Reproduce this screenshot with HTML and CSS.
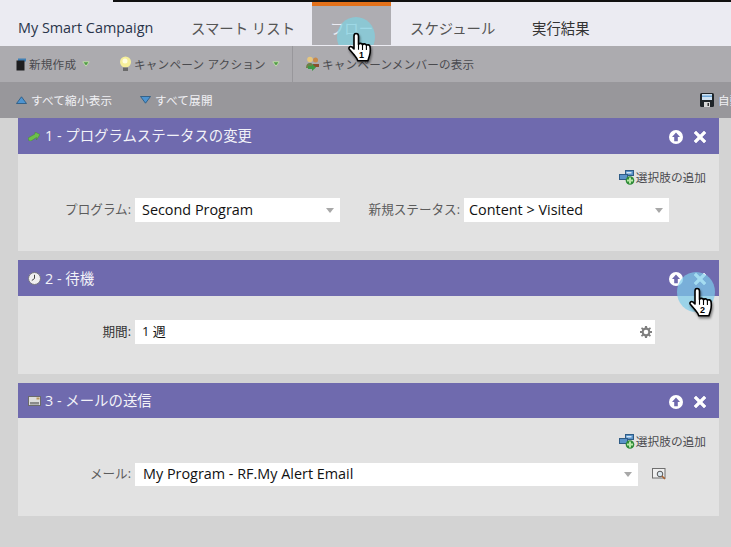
FILE: index.html
```html
<!DOCTYPE html>
<html lang="ja">
<head>
<meta charset="utf-8">
<title>My Smart Campaign</title>
<link rel="stylesheet" href="styles.css">
</head>
<body>
<svg class="defs" width="0" height="0" aria-hidden="true">
  <defs>
    <symbol id="up" viewBox="0 0 14 14"><circle cx="7" cy="7" r="7" fill="#fff"/><path d="M7 2.600 11 7H8.800v4.200H5.200V7H3z" fill="#6f6aae"/></symbol>
    <symbol id="x" viewBox="0 0 14 14"><path d="M3 1 7 5l4-4 2 2-4 4 4 4-2 2-4-4-4 4-2-2 4-4-4-4z" fill="#fff" stroke="#fff" stroke-width=".6" stroke-linejoin="round"/></symbol>
    <symbol id="add" viewBox="0 0 16 15"><rect x="6.500" y=".5" width="8" height="5" fill="#5a93c8" stroke="#2f5c86"/><rect x=".5" y="4.500" width="8" height="5" fill="#5a93c8" stroke="#2f5c86"/><rect x="7.500" y="2" width="5" height="1.500" fill="#d5e6f5"/><circle cx="11" cy="10.500" r="4.300" fill="#2e8b37"/><path d="M10 7.500h2v2h2v2h-2v2h-2v-2H8v-2h2z" fill="#b9e8a8"/></symbol>
    <symbol id="hand" viewBox="0 0 26 32"><path d="M8 1.500c1.600 0 2.500 1 2.500 2.600v8.400c.5-1.600 3.500-1.500 4 .3.700-1.400 3.400-1.200 3.900.6.900-1.100 3.300-.7 3.600 1.100.4 2.500.3 6.700-.6 9.400l-1.500 4.800H9.800c-.7-2.600-2.400-4.100-4.200-6.400L1.300 17.200c-1-1.500.7-3.400 2.500-2.300l2.200 2V4.100C6 2.500 6.600 1.500 8 1.500z" fill="#fff" stroke="#000" stroke-width="1.600" stroke-linejoin="round"/><path d="M10.500 12.800v5M14.500 13v5M18.400 14v4" stroke="#000" stroke-width="1.100" fill="none"/></symbol>
    <symbol id="tri" viewBox="0 0 8 6"><path d="M.8.8h6.400L4 5.200z" fill="#4f9a45" stroke="#cfe9b8" stroke-width=".8"/></symbol>
  </defs>
</svg>

<div class="page">
  <nav class="tabs">
    <span class="tab tab-name">My Smart Campaign</span>
    <span class="tab tab-list">スマート リスト</span>
    <span class="tab tab-active">フロー</span>
    <span class="tab tab-sched">スケジュール</span>
    <span class="tab tab-res">実行結果</span>
  </nav>

  <div class="toolbar">
    <span class="tool tool-new">
      <svg class="ico" width="11" height="15" viewBox="0 0 11 15"><path d="M2 2.500h8v3H2z" fill="#3f7fb5"/><path d="M.5 4.500h8v10h-8z" fill="#1d1d1f"/></svg>
      <span class="tool-text">新規作成</span>
      <svg class="tri" width="8" height="6"><use href="#tri"/></svg>
    </span>
    <span class="tool tool-action">
      <svg class="ico" width="13" height="16" viewBox="0 0 13 16"><circle cx="6.500" cy="6" r="5.500" fill="#f6ef9a"/><circle cx="6" cy="5" r="2.500" fill="#fffde0"/><path d="M4 11.500h5V15H4z" fill="#6a6a6a"/></svg>
      <span class="tool-text">キャンペーン アクション</span>
      <svg class="tri" width="8" height="6"><use href="#tri"/></svg>
    </span>
    <span class="tool tool-members">
      <svg class="ico" width="15" height="15" viewBox="0 0 15 15"><circle cx="5" cy="3.500" r="2.800" fill="#e7c77e"/><circle cx="10.500" cy="4" r="2.500" fill="#c88a4a"/><path d="M1 12c0-3.500 1.500-5 4-5s3 1.500 3 5z" fill="#6f7f48"/><path d="M8 11V8h6v3z" fill="#8a4f2e"/><path d="M3 10h4V8l4 3.500L7 15v-2H3z" fill="#3c9a45"/></svg>
      <span class="tool-text">キャンペーンメンバーの表示</span>
    </span>
  </div>

  <div class="subbar">
    <span class="sub sub-collapse">
      <svg class="ico" width="11" height="8" viewBox="0 0 11 8"><path d="M5.500.8 10.500 7.500H.5z" fill="#4e94d0" stroke="#24557f" stroke-width=".8"/></svg>
      すべて縮小表示
    </span>
    <span class="sub">
      <svg class="ico" width="11" height="8" viewBox="0 0 11 8"><path d="M.5.5h10L5.500 7.200z" fill="#4e94d0" stroke="#24557f" stroke-width=".8"/></svg>
      すべて展開
    </span>
    <span class="sub sub-save">
      <svg class="ico" width="14" height="14" viewBox="0 0 14 14"><rect width="14" height="14" rx="1.500" fill="#1f2428"/><rect x="2" y="1" width="10" height="6" fill="#cfe2f2"/><rect x="2" y="2.500" width="10" height="1.500" fill="#6ea6d6"/><rect x="4" y="9" width="6" height="5" fill="#d8d8d8"/><rect x="7.500" y="10" width="1.500" height="3" fill="#333"/></svg>
      自動保存
    </span>
  </div>

  <main class="flow">
    <section class="card card-1">
      <header class="card-head">
        <svg class="ico" width="12" height="9" viewBox="0 0 12 9"><path d="M0 6 7 2V0l5 2.500L8.500 8V5.500L3 9H1z" fill="#6cc04a" stroke="#3d7f2c" stroke-width=".4"/></svg>
        <span class="card-title">1 - プログラムステータスの変更</span>
        <span class="card-actions"><svg width="14" height="14"><use href="#up"/></svg><svg width="14" height="14"><use href="#x"/></svg></span>
      </header>
      <div class="card-body">
        <div class="choice"><svg width="16" height="15"><use href="#add"/></svg>選択肢の追加</div>
        <div class="row row-1">
          <label class="lbl lbl-prog">プログラム:</label>
          <div class="select sel-prog"><span>Second Program</span><i class="caret"></i></div>
          <label class="lbl lbl-status">新規ステータス:</label>
          <div class="select sel-status"><span>Content &gt; Visited</span><i class="caret"></i></div>
        </div>
      </div>
    </section>

    <section class="card card-2">
      <header class="card-head">
        <svg class="ico" width="13" height="13" viewBox="0 0 13 13"><circle cx="6.500" cy="6.500" r="6" fill="#f0f0f0" stroke="#77777f"/><path d="M6.500 2.800v3.700L3.800 8.500" stroke="#444" fill="none"/></svg>
        <span class="card-title">2 - 待機</span>
        <span class="card-actions"><svg width="14" height="14"><use href="#up"/></svg><svg width="14" height="14"><use href="#x"/></svg></span>
      </header>
      <div class="card-body">
        <div class="row">
          <label class="lbl lbl-prog lbl-dark">期間:</label>
          <div class="select sel-period"><span class="period-text">1 週</span>
            <svg class="gear" width="12" height="12" viewBox="0 0 12 12"><path d="M5 0h2l.3 1.700 1.200.5L10 1.200 11 2.600 9.800 3.800l.4 1.200H12v2h-1.800l-.4 1.200L11 9.400 9.800 10.800 8.500 9.800l-1.200.5L7 12H5l-.3-1.700-1.200-.5L2 10.800.9 9.400 2.200 8.200 1.800 7H0V5h1.800l.4-1.200L1 2.600 2 1.200l1.500 1 1.200-.5z" fill="#7f7f7f"/><circle cx="6" cy="6" r="2.300" fill="#fff"/></svg>
          </div>
        </div>
      </div>
    </section>

    <section class="card card-3">
      <header class="card-head">
        <svg class="ico" width="13" height="10" viewBox="0 0 13 10"><rect x=".5" y=".5" width="12" height="9" fill="#dcdcdc" stroke="#6b6b6b"/><path d="M2 6h9v2.500H2z" fill="#8a8a8a"/><rect x="8.500" y="1.500" width="3" height="2" fill="#b9975a"/></svg>
        <span class="card-title">3 - メールの送信</span>
        <span class="card-actions"><svg width="14" height="14"><use href="#up"/></svg><svg width="14" height="14"><use href="#x"/></svg></span>
      </header>
      <div class="card-body">
        <div class="choice"><svg width="16" height="15"><use href="#add"/></svg>選択肢の追加</div>
        <div class="row row-3">
          <label class="lbl lbl-prog">メール:</label>
          <div class="select sel-mail"><span>My Program - RF.My Alert Email</span><i class="caret"></i></div>
          <svg class="lookup" width="14" height="12" viewBox="0 0 14 12"><rect x=".5" y=".5" width="12.500" height="9.500" fill="#efefef" stroke="#6f6f6f"/><circle cx="8" cy="6" r="2.800" fill="#dbe7ef" stroke="#555"/><path d="m10 8 3 3" stroke="#a9622f" stroke-width="1.500"/></svg>
        </div>
      </div>
    </section>
  </main>
</div>

<div class="topline"></div>
<div class="pulse pulse-1"></div>
<svg class="hand hand-1" width="26" height="32"><use href="#hand"/></svg>
<span class="num num-1">1</span>
<div class="pulse pulse-2"></div>
<svg class="hand hand-2" width="26" height="32"><use href="#hand"/></svg>
<span class="num num-2">2</span>
</body>
</html>
```

FILE: styles.css
```css
* { box-sizing: border-box; }
html, body { margin: 0; padding: 0; }
body {
  width: 731px;
  height: 547px;
  overflow: hidden;
  position: relative;
  background: #d3d3d3;
  font-family: "Open Sans", "Noto Sans CJK JP", sans-serif;
  color: #333;
}
.defs { position: absolute; }
.page { display: flex; flex-direction: column; height: 547px; }

.tabs {
  display: flex;
  height: 46px;
  flex: none;
  background: #ebebf2;
  font-size: 14.400px;
  color: #333;
}
.tab { display: flex; align-items: center; height: 45px; padding-top: 9px; white-space: nowrap; }
.tab-name { margin-left: 18px; color: #29344a; width: 173px; }
.tab-list { width: 121px; color: #555; }
.tab-active {
  width: 79px;
  justify-content: center;
  background: #aeadb2;
  border-top: 6px solid #e4711a;
  padding-top: 3px;
  color: #ebebf2;
}
.tab-sched { margin-left: 19px; width: 122px; color: #555; }
.tab-res { color: #333; }

.toolbar {
  display: flex;
  align-items: center;
  height: 36px;
  flex: none;
  background: #acabaf;
  font-size: 11.600px;
  color: #4a4a4e;
  letter-spacing: .2px;
}
.tool { display: flex; align-items: center; gap: 2px; height: 36px; padding-bottom: 1px; }
.tool-text { white-space: nowrap; }
.tool-new { margin-left: 16px; width: 103px; }
.tool-action { width: 173px; }
.tool-members { border-left: 1px solid #98979b; padding-left: 12px; }
.tri { margin-left: 4px; }

.subbar {
  display: flex;
  align-items: center;
  height: 36px;
  flex: none;
  background: #98979b;
  font-size: 11.600px;
  color: #f0f0f4;
  letter-spacing: .2px;
}
.sub { display: flex; align-items: center; gap: 4px; white-space: nowrap; }
.sub-collapse { margin-left: 16px; width: 124px; }
.sub-save { margin-left: auto; width: 31px; overflow: hidden; flex: none; }
.sub-save .ico { flex: none; }

.flow { display: flex; flex-direction: column; gap: 9px; padding: 0 12px 0 18px; }
.card { display: flex; flex-direction: column; }
.card-head {
  display: flex;
  align-items: center;
  height: 36px;
  padding: 0 12px 0 10px;
  background: #6f6aae;
  color: #f2f2f8;
  font-size: 14.400px;
  line-height: 20px;
}
.card-3 .card-head { height: 35px; }
.card-title { margin-left: 5px; }
.card-2 .card-title { margin-left: 4px; margin-top: 2px; }
.card-3 .card-title { margin-left: 4px; }
.card-actions { margin-left: auto; display: flex; gap: 10px; margin-top: 2px; }
.card-body { background: #e2e2e2; position: relative; }
.card-1 .card-body { height: 97px; padding-top: 15px; }
.card-2 .card-body { height: 78px; padding-top: 24px; }
.card-3 .card-body { height: 98px; padding-top: 15px; }

.choice {
  display: flex;
  align-items: center;
  justify-content: flex-end;
  gap: 1px;
  height: 16px;
  padding-right: 13px;
  font-size: 11.700px;
  line-height: 14px;
  color: #4a4a4e;
}
.row { display: flex; align-items: center; height: 24px; }
.row-1, .row-3 { margin-top: 13px; }
.lbl {
  font-size: 12.600px;
  line-height: 16px;
  color: #5c5c5c;
  text-align: right;
  white-space: nowrap;
}
.lbl-dark { color: #333; }
.lbl-prog { width: 113px; }
.lbl-status { width: 120px; }

.select {
  display: flex;
  align-items: center;
  justify-content: space-between;
  height: 24px;
  margin-left: 4px;
  padding: 0 7px;
  background: #fff;
  font-size: 14.400px;
  line-height: 18px;
  color: #111;
}
.sel-prog { width: 205px; }
.sel-status { width: 205px; padding-left: 5px; }
.sel-period { width: 520px; padding-right: 3px; }
.period-text { font-size: 13px; margin-bottom: 2px; }
.sel-mail { width: 503px; height: 23px; padding-left: 8px; }
.caret {
  display: block;
  width: 0;
  height: 0;
  border: 4px solid transparent;
  border-top: 5px solid #a8a8a8;
  border-bottom: 0;
  margin-right: -1px;
}
.lookup { margin-left: 14px; }

.topline { position: absolute; left: 113px; right: 0; top: 0; height: 2px; background: #111; }
.pulse {
  position: absolute;
  width: 38px;
  height: 40px;
  border-radius: 50%;
}
.pulse-1 { left: 337px; top: 17px; background: rgba(125, 210, 225, .7); clip-path: inset(0 0 12px 0); }
.pulse-2 { left: 677px; top: 272px; background: rgba(125, 205, 235, .7); }
.hand { position: absolute; filter: drop-shadow(1px 2px 1px rgba(0,0,0,.45)); }
.hand-1 { left: 348px; top: 32px; }
.hand-2 { left: 689px; top: 287px; }
.num { position: absolute; font: bold 9px/10px "Liberation Sans", sans-serif; color: #000; }
.num-1 { left: 359px; top: 50px; }
.num-2 { left: 700px; top: 305px; }
```
